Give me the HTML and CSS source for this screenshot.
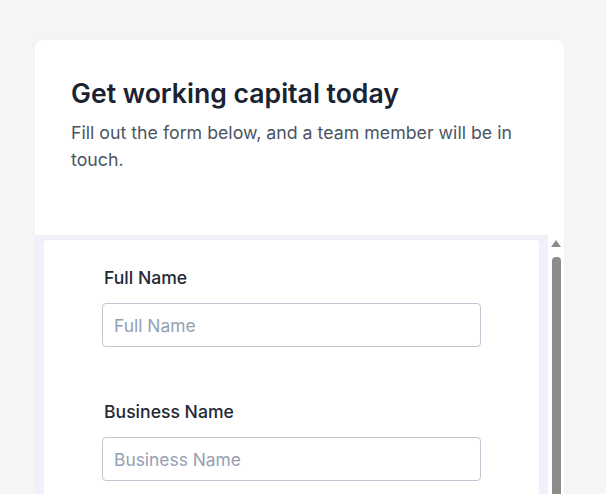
FILE: index.html
```html
<!DOCTYPE html>
<html lang="en">
<head>
<meta charset="utf-8">
<title>Get working capital today</title>
<link rel="stylesheet" href="styles.css">
</head>
<body>
<main class="card">
  <header class="card-head">
    <h1 class="title">Get working capital today</h1>
    <p class="subtitle">Fill out the form below, and a team member will be in touch.</p>
  </header>
  <section class="frame">
    <div class="frame-content">
      <form class="form-card">
        <div class="field">
          <label class="label" for="fn">Full Name</label>
          <input class="input" id="fn" type="text" placeholder="Full Name">
        </div>
        <div class="field">
          <label class="label" for="bn">Business Name</label>
          <input class="input" id="bn" type="text" placeholder="Business Name">
        </div>
      </form>
    </div>
    <div class="scrollbar">
      <div class="arrow"></div>
      <div class="thumb"></div>
    </div>
  </section>
</main>
</body>
</html>
```

FILE: styles.css
```css
* { box-sizing: border-box; }
html, body { height: 100%; }
body {
  margin: 0;
  background: #f4f5f4;
  font-family: Inter, "Noto Sans", sans-serif;
  overflow: hidden;
}
.card {
  margin: 40px 0 0 35px;
  width: 529px;
  background: #ffffff;
  border-radius: 8px;
  box-shadow: 0 0 2px rgba(0,0,0,0.04);
  overflow: hidden;
}
.card-head {
  padding: 37px 36px 0 36px;
  height: 195px;
}
.title {
  margin: 0;
  font-size: 26.6px;
  line-height: 32px;
  font-weight: 600;
  color: #1a2332;
}
.subtitle {
  margin: 10px 0 0 0;
  font-size: 17.75px;
  line-height: 27px;
  color: #4b5563;
  font-weight: 400;
}
.frame {
  display: flex;
  height: 300px;
}
.frame-content {
  flex: 1;
  background: #f1f1fc;
  padding: 5px 9px 0 9px;
}
.form-card {
  background: #ffffff;
  border-radius: 4px 4px 0 0;
  height: 100%;
  padding: 26px 58px 0 58px;
  display: flex;
  flex-direction: column;
  gap: 53px;
}
.field {
  display: flex;
  flex-direction: column;
  gap: 13px;
}
.label {
  padding-left: 2px;
  font-size: 17.6px;
  line-height: 24px;
  font-weight: 500;
  color: #1f2937;
}
.input {
  width: 379px;
  height: 44px;
  border: 1px solid #c3c3d2;
  border-radius: 4px;
  padding: 0 11px;
  font-family: Inter, "Noto Sans", sans-serif;
  font-size: 17.4px;
  color: #1f2937;
  background: #ffffff;
  outline: none;
}
.input::placeholder { color: #94a0b4; }
.scrollbar {
  width: 16px;
  background: #ffffff;
  padding: 5px 3px 0 3px;
  display: flex;
  flex-direction: column;
  align-items: center;
}
.arrow {
  width: 0;
  height: 0;
  border-left: 5px solid transparent;
  border-right: 5px solid transparent;
  border-bottom: 7px solid #8c8c8c;
  margin-bottom: 10px;
}
.thumb {
  width: 9px;
  flex: 1;
  background: #8c8c8c;
  border-radius: 4px 4px 0 0;
}
```
